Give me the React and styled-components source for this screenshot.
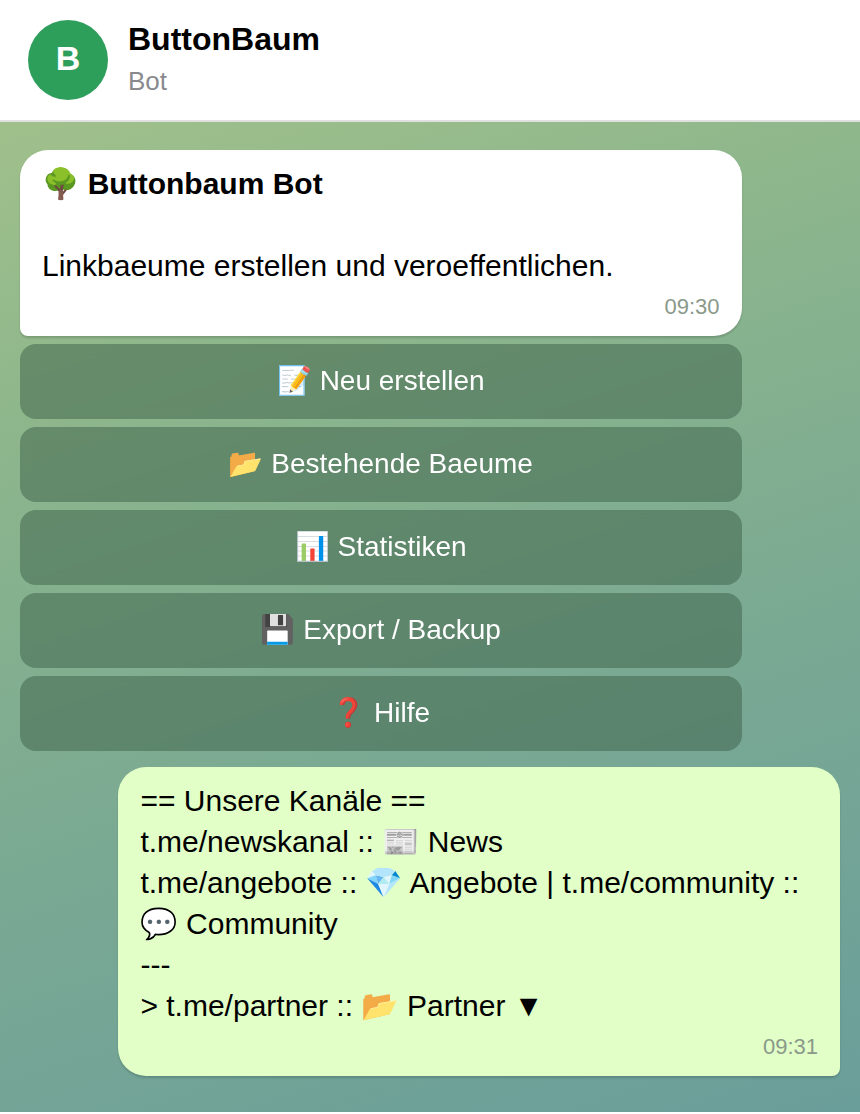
import React from 'react';
import styled, { createGlobalStyle } from 'styled-components';

const GlobalStyle = createGlobalStyle`
  * { box-sizing: border-box; }
  body {
    margin: 0;
    background: #ffffff;
    font-family: "Liberation Sans", Arial, "Noto Color Emoji", sans-serif;
    color: #000000;
  }
`;

const Page = styled.div`
  display: flex;
  flex-direction: column;
`;

const Header = styled.header`
  display: flex;
  align-items: center;
  gap: 20px;
  padding: 20px 28px;
  background: #ffffff;
  border-bottom: 2px solid #e0e0e0;
`;

const Avatar = styled.div`
  display: flex;
  align-items: center;
  justify-content: center;
  width: 80px;
  height: 80px;
  padding-bottom: 4px;
  border-radius: 50%;
  background: #2e9e5b;
  color: #ffffff;
  font-size: 34px;
  font-weight: 700;
`;

const Title = styled.h1`
  margin: 0;
  font-size: 32px;
  line-height: 38px;
  font-weight: 700;
`;

const Subtitle = styled.p`
  margin: 0;
  padding-top: 4px;
  font-size: 26px;
  line-height: 38px;
  color: #8a8a8e;
`;

const Chat = styled.main`
  display: flex;
  flex-direction: column;
  gap: 16px;
  padding: 28px 20px 36px;
  background: linear-gradient(162deg, #a0c08b 0%, #8db68c 25%, #7aa993 60%, #6a9e9a 100%);
`;

const BotTurn = styled.section`
  display: flex;
  flex-direction: column;
  gap: 8px;
  width: 88%;
`;

const Bubble = styled.article`
  padding: 13px 22px 14px;
  font-size: 30px;
  line-height: 41px;
  white-space: pre-wrap;
  background: ${({ $own }) => ($own ? '#e1ffc7' : '#ffffff')};
  border-radius: ${({ $own }) => ($own ? '28px 28px 8px 28px' : '28px 28px 28px 8px')};
  box-shadow: 0 2px 2px rgba(0, 0, 0, 0.15);
  ${({ $own }) => $own && 'align-self: flex-end; width: 88%;'}
`;

const Text = styled.p`
  margin: 0;
`;

const Time = styled.time`
  display: block;
  padding-top: 6px;
  text-align: right;
  font-size: 22px;
  line-height: 30px;
  color: #8a998a;
`;

const Keyboard = styled.div`
  display: grid;
  gap: 8px;
`;

const KeyButton = styled.button`
  padding: 20px 20px 21px;
  border: 0;
  border-radius: 16px;
  background: rgba(60, 95, 72, 0.5);
  backdrop-filter: blur(4px);
  color: #ffffff;
  font-family: inherit;
  font-size: 28px;
  line-height: 34px;
  cursor: pointer;
`;

const ACTIONS = [
  '📝 Neu erstellen',
  '📂 Bestehende Baeume',
  '📊 Statistiken',
  '💾 Export / Backup',
  '❓ Hilfe',
];

const CHANNELS = `== Unsere Kanäle ==
t.me/newskanal :: 📰 News
t.me/angebote :: 💎 Angebote | t.me/community :: 💬 Community
---
> t.me/partner :: 📂 Partner ▼`;

export default function App() {
  return (
    <Page>
      <GlobalStyle />
      <Header>
        <Avatar>B</Avatar>
        <div>
          <Title>ButtonBaum</Title>
          <Subtitle>Bot</Subtitle>
        </div>
      </Header>
      <Chat>
        <BotTurn>
          <Bubble>
            <Text>
              🌳 <b>Buttonbaum Bot</b>
              {'\n\n'}Linkbaeume erstellen und veroeffentlichen.
            </Text>
            <Time dateTime="09:30">09:30</Time>
          </Bubble>
          <Keyboard>
            {ACTIONS.map((label) => (
              <KeyButton key={label} type="button">{label}</KeyButton>
            ))}
          </Keyboard>
        </BotTurn>
        <Bubble $own>
          <Text>{CHANNELS}</Text>
          <Time dateTime="09:31">09:31</Time>
        </Bubble>
      </Chat>
    </Page>
  );
}
